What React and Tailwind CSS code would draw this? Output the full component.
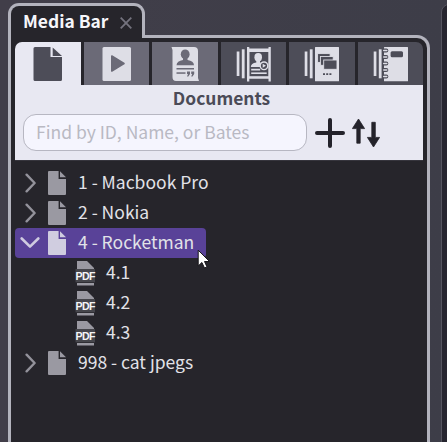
import React from "react";

const DocIcon = ({ className }) => (
  <svg viewBox="0 0 18 24" className={className} fill="currentColor">
    <path d="M1 0H10.6V8H18V23Q18 24 17 24H1Q0 24 0 23V1Q0 0 1 0Z" />
    <path d="M12 0.3L18 6.3H12Z" />
  </svg>
);

const Chevron = ({ open }) =>
  open ? (
    <svg viewBox="0 0 20 12" className="h-3 w-5" fill="none" stroke="#cfcbe0" strokeWidth="2.6" strokeLinecap="round" strokeLinejoin="round">
      <path d="M1.7 1.5L10 9.6L18.3 1.5" />
    </svg>
  ) : (
    <svg viewBox="0 0 12 20" className="ml-1 h-5 w-3" fill="none" stroke="#93929b" strokeWidth="2.4" strokeLinecap="round" strokeLinejoin="round">
      <path d="M2.6 1.7L10.6 10L2.6 18.3" />
    </svg>
  );

const PdfIcon = () => (
  <svg viewBox="0 0 20 25" className="h-[25px] w-5 shrink-0 overflow-visible">
    <path d="M2 0H12L19 7V8H2Z" fill="#9a99a2" />
    <path d="M2 22H19V24.5H2Z" fill="#9a99a2" />
    <rect x="0.5" y="8" width="19.5" height="13.3" fill="#45454b" />
    <text x="10.2" y="18.9" textAnchor="middle" fontSize="10.6" fontWeight="700" letterSpacing="-0.6" fill="#f4f4f6" fontFamily="'Liberation Sans', sans-serif">PDF</text>
  </svg>
);

const Folder = ({ label, selected }) => (
  <div className={`flex h-[30px] items-center self-start rounded-[4px] pl-[5px] pr-3 ${selected ? "bg-[#594298]" : ""}`}>
    <div className="flex w-7 shrink-0"><Chevron open={selected} /></div>
    <DocIcon className={`h-6 w-[18px] shrink-0 ${selected ? "text-[#d0cde0]" : "text-[#9a99a2]"}`} />
    <span className="-mt-[3px] ml-3 whitespace-pre text-[17.5px] leading-[30px] text-[#e2e2e8]">{label}</span>
  </div>
);

const File = ({ label }) => (
  <div className="flex h-[30px] items-center pl-[60px]">
    <PdfIcon />
    <span className="-mt-[3px] ml-[11px] text-[17.5px] leading-[30px] text-[#e2e2e8]">{label}</span>
  </div>
);

const Video = () => (
  <svg viewBox="0 0 66 43" className="h-[43px] w-[66px]">
    <rect x="18.5" y="5" width="28.5" height="34" rx="1.5" fill="#dedee6" />
    <path d="M27.8 14L40 21.5L27.8 29Z" fill="#6b6a77" stroke="#6b6a77" strokeWidth="1.6" strokeLinejoin="round" />
  </svg>
);

const Witness = () => (
  <svg viewBox="0 0 66 43" className="h-[43px] w-[66px]">
    <path d="M19.5 5H42Q46 5 46 9V36L47 39H24Q20.5 39 20.5 35V8Z" fill="#dedee6" />
    <g fill="#6b6a77">
      <ellipse cx="33.2" cy="12.3" rx="4.4" ry="4.9" />
      <path d="M31 15H35.5V18Q41.8 19 42 23.3H24.5Q24.8 19 31 18Z" />
      <rect x="24.5" y="26" width="17.5" height="1.5" />
      <rect x="24.5" y="30.3" width="9" height="1.5" />
      <path d="M35 29.6H38V32L36.3 34.6H35L36 32H35ZM39.2 29.6H42.2V32L40.5 34.6H39.2L40.2 32H39.2Z" />
    </g>
  </svg>
);

const Spines = () => (
  <g fill="#dedee6">
    <rect x="15.7" y="9.5" width="2.7" height="24.5" />
    <rect x="20.8" y="7.3" width="2.8" height="29" />
  </g>
);

const Clips = () => (
  <svg viewBox="0 0 66 43" className="h-[43px] w-[66px]">
    <Spines />
    <path d="M26 5H28.3V6.5H47.5V5H49.8V39.5H47.5V36.7H28.3V39.5H26Z" fill="#dedee6" />
    <rect x="28.5" y="10" width="18.8" height="24.2" fill="#4d4d58" />
    <g fill="#dedee6">
      <ellipse cx="37.2" cy="15.2" rx="3.8" ry="4.2" />
      <path d="M35.3 18H39V20.5Q42.8 21.3 43 25H29.8Q30 21.3 35.3 20.5Z" />
      <rect x="30.2" y="26.8" width="9" height="1.7" />
      <rect x="30.2" y="30.4" width="15.5" height="1.6" />
    </g>
    <circle cx="43" cy="23.8" r="3.8" fill="#4d4d58" stroke="#dedee6" strokeWidth="1.4" />
    <path d="M41.7 21.8L45 23.8L41.7 25.8Z" fill="#dedee6" />
  </svg>
);

const Slides = () => (
  <svg viewBox="0 0 66 43" className="h-[43px] w-[66px]">
    <Spines />
    <rect x="26" y="5" width="24" height="34.2" rx="0.5" fill="#dedee6" />
    <g fill="#4d4d58" stroke="#dedee6" strokeWidth="0.9">
      <rect x="28.6" y="11.6" width="12.5" height="8.8" />
      <rect x="31.4" y="14.5" width="12.8" height="8.8" />
      <rect x="34.7" y="18" width="13.3" height="9.3" />
    </g>
    <path d="M34 32.2H36M37.2 32.2H39.2M40.4 32.2H42.4" stroke="#4d4d58" strokeWidth="1.7" />
  </svg>
);

const Notebook = () => (
  <svg viewBox="0 0 66 43" className="h-[43px] w-[66px]">
    <Spines />
    <rect x="26" y="5" width="24" height="34.2" rx="0.5" fill="#dedee6" />
    <rect x="32.6" y="9.3" width="12.4" height="6" rx="1.5" fill="#4d4d58" />
    {[8.5, 15, 21.5, 28, 34.5].map((y) => (
      <g key={y}>
        <rect x="24.3" y={y - 1.9} width="6" height="3.8" rx="1.9" fill="#4d4d58" />
        <rect x="25" y={y - 0.8} width="4.5" height="1.6" rx="0.8" fill="#dedee6" />
      </g>
    ))}
  </svg>
);

export default function App() {
  return (
    <div className="flex h-[442px] w-[447px] overflow-hidden bg-linear-to-r from-[#413e49] to-[#3d3d48] pl-2 font-['Noto_Sans_CJK_SC','Noto_Sans',sans-serif]">
      <div className="flex w-[422px] shrink-0 flex-col pt-[3px]">
        <div className="relative z-10 -mb-[3px] flex h-[35px] w-[137px] items-center rounded-t-[11px] border-x-[3px] border-t-[3px] border-[#b3b3bd] bg-[#26252b] pl-3">
          <span className="-mt-[3px] w-[85px] whitespace-nowrap text-[17.4px] font-bold leading-[30px] text-[#f6f6fa]">Media Bar</span>
          <svg viewBox="0 0 12 12" className="ml-3 mt-px h-3 w-3 shrink-0" stroke="#74737e" strokeWidth="1.8">
            <path d="M0.7 0.7L11.3 11.3M11.3 0.7L0.7 11.3" />
          </svg>
        </div>
        <div className="flex flex-1 flex-col rounded-tr-[13px] border-x-[3px] border-t-[3px] border-[#b3b3bd] bg-[#26252b] pl-1 pr-1 pt-1">
          <div className="grid h-[43px] grid-cols-6 gap-[3px] overflow-hidden rounded-t-[7px]">
            <div className="bg-[#e8e8f2]">
              <svg viewBox="0 0 66 43" className="h-[43px] w-[66px]" fill="#4d4d58">
                <path d="M20 5H35.5V15H47V37.5Q47 39 45.5 39H20Q18.5 39 18.5 37.5V6.5Q18.5 5 20 5Z" />
                <path d="M37.7 5.5L47 14H37.7Z" />
              </svg>
            </div>
            <div className="bg-[#6b6a77]"><Video /></div>
            <div className="bg-[#6b6a77]"><Witness /></div>
            <div className="bg-[#4d4d58]"><Clips /></div>
            <div className="bg-[#4d4d58]"><Slides /></div>
            <div className="bg-[#4d4d58]"><Notebook /></div>
          </div>
          <div className="h-[75px] bg-[#e8e8f2] px-2">
            <div className="h-[29px] pl-[5px] text-center text-[17.4px] font-bold leading-[25px] text-[#4b4b57]">Documents</div>
            <div className="flex items-center">
              <input
                placeholder="Find by ID, Name, or Bates"
                className="h-[37px] w-[284px] rounded-[13px] border-[1.5px] border-[#b7b7c2] bg-[#f5f5fe] pb-[3px] pl-3 text-[17.5px] text-[#4b4b57] outline-none placeholder:text-[#b9b9c3]"
              />
              <svg viewBox="0 0 30 30" className="ml-2 h-[30px] w-[30px] shrink-0" stroke="#24232b" strokeWidth="4" strokeLinecap="round">
                <path d="M2 15H28M15 2V28" />
              </svg>
              <svg viewBox="0 0 28 30" className="ml-[7px] h-[30px] w-7 shrink-0" fill="#24232b" stroke="#24232b" strokeWidth="0.8" strokeLinejoin="round">
                <path d="M6.5 1L12.6 10.6H8.2V25.2H4.8V10.6H0.4Z" />
                <path d="M21.5 29L27.6 19.4H23.3V4.3H19.8V19.4H15.4Z" />
              </svg>
            </div>
          </div>
          <div className="flex flex-col border-t border-[#36353d] pt-[7px]">
            <Folder label="1 - Macbook Pro" />
            <Folder label="2 - Nokia" />
            <Folder label="4 - Rocketman" selected />
            <File label="4.1" />
            <File label="4.2" />
            <File label="4.3" />
            <Folder label="998 - cat jpegs" />
          </div>
        </div>
      </div>
      <div className="ml-[11px] mt-1 h-[450px] w-10 shrink-0 rounded-tl-[8px] border-[1.5px] border-[#55545f] bg-[#26252f]" />
      <svg viewBox="0 0 14 20" className="absolute left-[197px] top-[249px] h-5 w-3.5">
        <path d="M1.2 1.2V17L4.9 13.5L7.5 19L10 17.9L7.5 12.5H12.5Z" fill="#fff" stroke="#17161b" strokeWidth="1" />
      </svg>
    </div>
  );
}
